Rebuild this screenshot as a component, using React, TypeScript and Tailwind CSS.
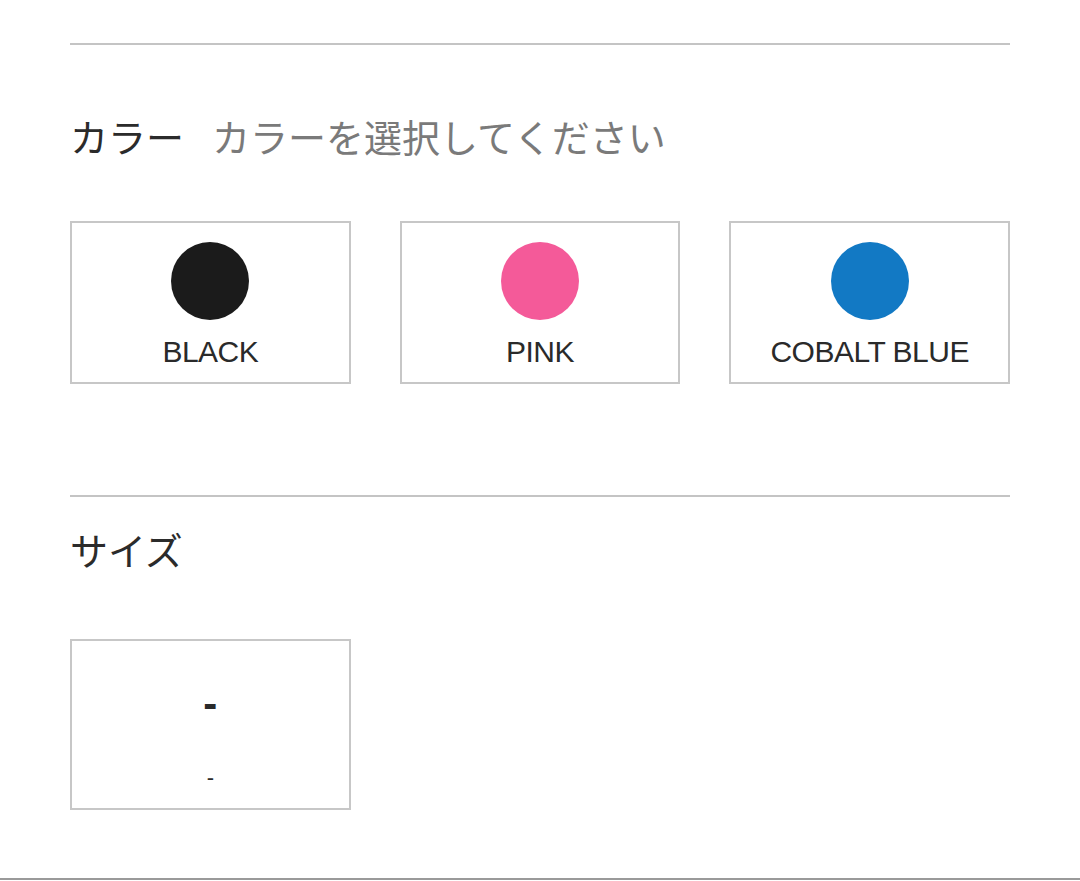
const jp = "font-['Noto_Sans_CJK_JP','Noto_Sans',sans-serif]";

type Swatch = { name: string; color: string };

const colors: Swatch[] = [
  { name: 'BLACK', color: 'bg-[#1b1b1b]' },
  { name: 'PINK', color: 'bg-[#f45a99]' },
  { name: 'COBALT BLUE', color: 'bg-[#1279c4]' },
];

const ColorCard = ({ name, color }: Swatch) => (
  <button className="flex h-[163px] flex-col items-center border-2 border-[#c7c7c7] bg-white pt-[19px]">
    <span className={`block h-[78px] w-[78px] rounded-full ${color}`} />
    <span className="mt-[14px] font-['Liberation_Sans',Arial,sans-serif] text-[30px] leading-[36px] tracking-[-0.5px] text-[#2a2a2a]">
      {name}
    </span>
  </button>
);

export default function App() {
  return (
    <div className={`bg-white ${jp}`}>
      <div className="px-[70px] pt-[43px]">
        <section className="border-t-2 border-[#c4c4c4]">
          <h2 className="mt-[69px] flex items-baseline gap-[28px] text-[38px] leading-[44px]">
            <span className="text-[#2b2b2b]">カラー</span>
            <span className="text-[#7a7a7a]">カラーを選択してください</span>
          </h2>
          <div className="mt-[63px] grid grid-cols-3 gap-[49px]">
            {colors.map((c) => (
              <ColorCard key={c.name} {...c} />
            ))}
          </div>
        </section>

        <section className="mt-[111px] border-t-2 border-[#c4c4c4]">
          <h2 className="mt-[30px] text-[38px] leading-[44px] text-[#2b2b2b]">サイズ</h2>
          <div className="mt-[68px] grid grid-cols-3 gap-[49px]">
            <button className="flex h-[171px] flex-col items-center border-2 border-[#c7c7c7] bg-white pt-[43px] font-['Liberation_Sans',Arial,sans-serif] text-[#2a2a2a]">
              <span className="text-[42px] font-bold leading-[40px]">-</span>
              <span className="mt-[41px] text-[22px] leading-[26px]">-</span>
            </button>
          </div>
        </section>
      </div>
      <div className="mt-[68px] border-b-2 border-[#9a9a9a]" />
    </div>
  );
}
